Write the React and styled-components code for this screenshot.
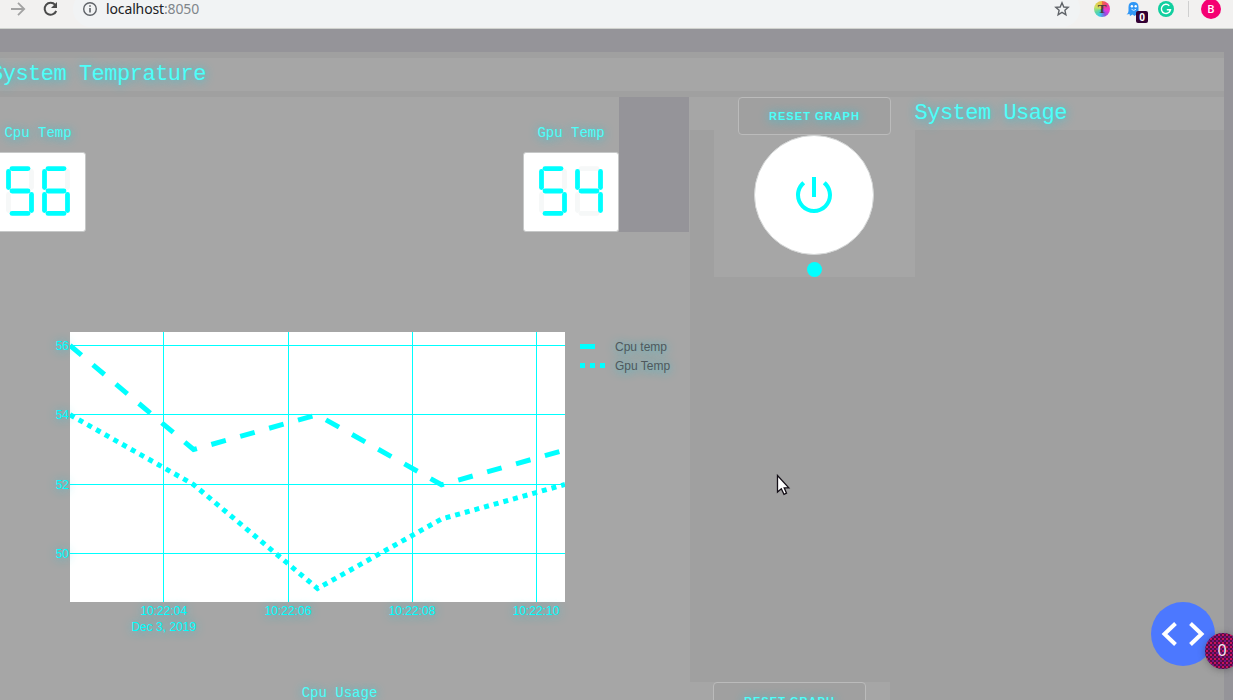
import React from "react";
import styled, { createGlobalStyle, css } from "styled-components";

const light = "#a6a6a6";
const mid = "#a0a0a0";
const dark = "#959499";
const cyan = "#00ffff";

const Global = createGlobalStyle`
  * { box-sizing: border-box; }
  html, body { margin: 0; height: 100%; overflow: hidden; background: ${dark}; }
`;

const glow = css`
  color: #4dfff9;
  text-shadow: 0 1px 10px rgba(30, 205, 225, 0.95);
`;

const Window = styled.div`
  position: relative;
  width: 1233px;
  height: 700px;
  overflow: hidden;
  background: ${dark};
`;

/* ---------- browser bar ---------- */
const Toolbar = styled.header`
  display: flex;
  align-items: center;
  height: 29px;
  padding: 0 12px 10px 10px;
  background: #f2f1f0;
  border-bottom: 1px solid #cfd2ce;
`;
const NavIcons = styled.div`
  display: flex;
  gap: 17px;
  width: 63px;
  flex: none;
`;
const Omnibox = styled.div`
  display: flex;
  align-items: center;
  flex: none;
  width: 1007px;
  height: 36px;
  margin: -9px 0;
  padding: 0 10px 0 9px;
  border-radius: 18px;
  background: #f1f3f4;
`;
const Url = styled.span`
  flex: 1;
  margin-left: 8px;
  font: 14px/18px "Noto Sans", "Open Sans", sans-serif;
  letter-spacing: -0.13px;
  color: #202124;
  span { color: #80868b; }
`;
const Extensions = styled.div`
  display: flex;
  align-items: center;
  flex: none;
  margin-left: 14px;
  gap: 14px;
`;
const Rainbow = styled.span`
  display: grid;
  place-items: center;
  width: 16px;
  height: 16px;
  border-radius: 50%;
  background: conic-gradient(#f07040, #f04080 12%, #e838d8 30%, #9050e0 42%, #38c8e8 55%, #60d8a0 68%, #d0e060 80%, #f0b840);
  font: bold 13px/16px "Liberation Serif", serif;
  color: #4a403c;
`;
const Ghost = styled.span`
  position: relative;
  width: 20px;
  height: 18px;
  svg { display: block; margin-left: 2px; }
`;
const GhostCount = styled.b`
  position: absolute;
  left: 12px;
  top: 11px;
  width: 12px;
  height: 12px;
  border-radius: 2px;
  background: #330033;
  color: #fff;
  font: bold 10px/12px "Open Sans", sans-serif;
  text-align: center;
`;
const Divider = styled.i`
  width: 1px;
  height: 16px;
  background: #cfcfcf;
`;
const Avatar = styled.span`
  display: grid;
  place-items: center;
  width: 20px;
  height: 20px;
  margin-left: -2px;
  border-radius: 50%;
  background: #f50072;
  color: #fff;
  font: 600 11px/20px "Open Sans", sans-serif;
`;

/* ---------- dashboard ---------- */
const Page = styled.main`
  width: 1224px;
  margin-top: 23px;
  background: ${mid};
`;
const Banner = styled.div`
  padding: 6px 0;
  height: 45px;
`;
const BannerInner = styled.div`
  height: 33px;
  background: ${light};
`;
const Heading = styled.h5`
  margin: 0;
  margin-left: ${(p) => p.$shift || 0}px;
  padding-top: 2px;
  font: 400 22px/30px "Liberation Mono", monospace;
  letter-spacing: -0.5px;
  white-space: pre;
  ${glow}
`;
const Columns = styled.div`
  display: flex;
  height: 603px;
`;
const Left = styled.section`
  width: 690px;
  flex: none;
  background: ${light};
`;
const Readouts = styled.div`
  display: flex;
  justify-content: space-between;
  width: 629px;
  margin-left: -10px;
`;
const ReadoutRow = styled.div`
  display: flex;
  height: 135px;
`;
const Filler = styled.div`
  width: 70px;
  background: ${dark};
`;
const Readout = styled.div`
  width: 96px;
  padding-top: 28px;
`;
const Label = styled.h6`
  margin: 0;
  font: 400 14px/17px "Liberation Mono", monospace;
  text-align: center;
  white-space: nowrap;
  ${glow}
`;
const Display = styled.div`
  display: flex;
  gap: 8px;
  width: 96px;
  height: 80px;
  margin-top: 10px;
  padding: 13px 15px;
  background: #fff;
  border: 1px solid #c6c8c8;
  border-radius: 3px;
`;
const ChartArea = styled.svg`
  display: block;
  width: 690px;
  height: 351px;
  margin-top: 100px;
  font: 12px "Liberation Sans", Arial, sans-serif;
  text { text-shadow: 0 1px 10px rgba(30, 205, 225, 0.85); }
`;
const UsageLabel = styled(Label)`
  padding: 2px 11px 0 0;
`;
const Right = styled.section`
  display: flex;
  flex-direction: column;
  justify-content: space-between;
  flex: 1;
`;
const UsageHeader = styled.div`
  display: flex;
  align-items: flex-start;
  height: 33px;
  padding-left: 24px;
  background: ${light};
`;
const Controls = styled.div`
  display: flex;
  flex-direction: column;
  align-items: center;
  width: 201px;
  height: 180px;
  background: ${light};
`;
const ResetButton = styled.button`
  width: 153px;
  height: 38px;
  flex: none;
  padding: 1px 0 0;
  border: 1px solid #bbb;
  border-radius: 4px;
  background: ${mid};
  font: bold 11px/35px "Liberation Sans", Arial, sans-serif;
  letter-spacing: 1.05px;
  ${glow}
`;
const PowerButton = styled.div`
  display: grid;
  place-items: center;
  width: 120px;
  height: 120px;
  flex: none;
  margin-right: 1px;
  border: 1px solid #d4d6d6;
  border-radius: 50%;
  background: #fff;
`;
const Led = styled.i`
  width: 15px;
  height: 15px;
  margin-top: 7px;
  border-radius: 50%;
  background: ${cyan};
`;
const FooterControls = styled.div`
  width: 200px;
  height: 18px;
  padding-left: 23px;
  overflow: hidden;
  background: ${light};
`;

/* ---------- overlays ---------- */
const DebugMenu = styled.div`
  position: absolute;
  left: 1151px;
  top: 602px;
  width: 64px;
  height: 64px;
  border-radius: 50%;
  background: #4c78ff;
`;
const DebugCount = styled.div`
  position: absolute;
  left: 54px;
  top: 31px;
  width: 36px;
  height: 36px;
  padding-right: 2px;
  border-radius: 50%;
  background:
    radial-gradient(circle, #f01468 0.6px, transparent 1px) 0 0 / 4px 4px,
    radial-gradient(circle, #7a1480 0.8px, transparent 1.1px) 2px 2px / 4px 4px,
    #560d42;
  box-shadow: 0 1px 7px rgba(60, 60, 60, 0.45);
  color: #f4e8f2;
  font: 16px/35px "Noto Sans", sans-serif;
  text-align: center;
`;
const Cursor = styled.svg`
  position: absolute;
  left: 776px;
  top: 474px;
`;

const SEGMENTS = {
  a: [6, 2.6, 22, 2.6],
  b: [25.5, 5.5, 25.5, 21.5],
  c: [25.5, 28.5, 25.5, 44.5],
  d: [6, 47.4, 22, 47.4],
  e: [2.5, 28.5, 2.5, 44.5],
  f: [2.5, 5.5, 2.5, 21.5],
  g: [6, 25, 22, 25],
};
const LIT = { 4: "bcfg", 5: "acdfg", 6: "acdefg" };

function Digit({ value }) {
  const keys = Object.keys(SEGMENTS).sort((p, q) => LIT[value].includes(p) - LIT[value].includes(q));
  return (
    <svg width="28" height="50" viewBox="0 0 28 50" strokeWidth="4.8" strokeLinecap="round">
      {keys.map((k) => {
        const [x1, y1, x2, y2] = SEGMENTS[k];
        return <line key={k} x1={x1} y1={y1} x2={x2} y2={y2} stroke={LIT[value].includes(k) ? cyan : "#f6f8f8"} />;
      })}
    </svg>
  );
}

function Temp({ label, value }) {
  return (
    <Readout>
      <Label>{label}</Label>
      <Display>{[...value].map((d, i) => <Digit key={i} value={d} />)}</Display>
    </Readout>
  );
}

const xTicks = [[163.5, "10:22:04"], [288.5, "10:22:06"], [412.5, "10:22:08"], [536.5, "10:22:10"]];
const yTicks = [[13.5, "56"], [82.5, "54"], [152.5, "52"], [221.5, "50"]];

function Chart() {
  return (
    <ChartArea viewBox="0 0 690 351">
      <defs><clipPath id="plot"><rect x="70" width="495" height="270" /></clipPath></defs>
      <rect x="70" width="495" height="270" fill="#fff" />
      <g stroke={cyan}>
        {xTicks.map(([x]) => <line key={x} x1={x} x2={x} y1="0" y2="270" />)}
        {yTicks.map(([y]) => <line key={y} x1="70" x2="565" y1={y} y2={y} />)}
      </g>
      <g fill="none" stroke={cyan} strokeWidth="5" clipPath="url(#plot)">
        <path strokeDasharray="15 15" d="M70 13.5L193.5 117.5L317 82.8L441.5 152.8L565 118" />
        <path strokeDasharray="5 5" d="M70 82.8L193.5 152.5L317.5 256.5L441.5 187L565 152.5" />
      </g>
      <g fill="none" stroke={cyan} strokeWidth="5">
        <path strokeDasharray="15 15" d="M580 14.5H610" />
        <path strokeDasharray="5 5" d="M580 33.5H610" />
      </g>
      <g fill={cyan}>
        {yTicks.map(([y, t]) => <text key={t} x="69" y={y + 4.3} textAnchor="end">{t}</text>)}
        {xTicks.map(([x, t], i) => <text key={t} x={i ? x - 0.5 : x + 0.3} y="283" textAnchor="middle">{t}</text>)}
        <text x="163.8" y="299" textAnchor="middle">Dec 3, 2019</text>
      </g>
      <g fill="#4f585c">
        <text x="615" y="19">Cpu temp</text>
        <text x="615" y="38">Gpu Temp</text>
      </g>
    </ChartArea>
  );
}

export default function App() {
  return (
    <Window>
      <Global />
      <Toolbar>
        <NavIcons>
          <svg width="16" height="16" viewBox="0 0 16 16" fill="none" stroke="#a3a3a3" strokeWidth="1.8">
            <path d="M1 8H14M8 1.8L14.2 8L8 14.2" />
          </svg>
          <svg width="16" height="16" viewBox="0 0 16 16" fill="none" stroke="#4a4a4a" strokeWidth="2">
            <path d="M12.2 3.8A6 6 0 1 0 13.2 10" />
            <path d="M14 1V7H8Z" fill="#4a4a4a" stroke="none" />
          </svg>
        </NavIcons>
        <Omnibox>
          <svg width="16" height="16" viewBox="0 0 16 16" fill="none" stroke="#5f6368">
            <circle cx="8" cy="8" r="6.3" strokeWidth="1.4" />
            <path d="M8 7V11.5M8 4.2V5.8" strokeWidth="1.6" />
          </svg>
          <Url>localhost<span>:8050</span></Url>
          <svg width="16" height="16" viewBox="0 0 16 16" fill="none" stroke="#5f6368" strokeWidth="1.4">
            <path d="M8 1.8L9.8 6L14.2 6.4L10.9 9.3L11.9 13.8L8 11.4L4.1 13.8L5.1 9.3L1.8 6.4L6.2 6Z" />
          </svg>
        </Omnibox>
        <Extensions>
          <Rainbow>T</Rainbow>
          <Ghost>
            <svg width="15" height="18" viewBox="0 0 14 18">
              <path fill="#3097f5" d="M2 7Q2 2 7 2T12 7V13L14 15L10 14.5L8 16L6 14.5L3.5 16L3 14L0 14.5Q2 13 2 11Z" />
              <circle cx="5.4" cy="6.3" r="1.2" fill="#fff" />
              <circle cx="9.2" cy="6.3" r="1.2" fill="#fff" />
              <path d="M5 9.3Q7.2 11.5 9.5 9.3" fill="none" stroke="#d8ecff" />
            </svg>
            <GhostCount>0</GhostCount>
          </Ghost>
          <svg width="16" height="16" viewBox="0 0 16 16">
            <circle cx="8" cy="8" r="8" fill="#11cf9f" />
            <path d="M11.3 4.7A4.6 4.6 0 1 0 12.5 8.8H8.8M12.4 8.6L10.9 11.8" fill="none" stroke="#fff" strokeWidth="1.4" />
          </svg>
          <Divider />
          <Avatar>B</Avatar>
        </Extensions>
      </Toolbar>

      <Page>
        <Banner>
          <BannerInner><Heading $shift={-10}>System Temprature</Heading></BannerInner>
        </Banner>
        <Columns>
          <Left>
            <ReadoutRow>
              <Readouts>
                <Temp label="Cpu Temp" value="56" />
                <Temp label="Gpu Temp" value="54" />
              </Readouts>
              <Filler />
            </ReadoutRow>
            <Chart />
            <UsageLabel>Cpu Usage</UsageLabel>
          </Left>
          <Right>
            <UsageHeader>
              <Controls>
                <ResetButton>RESET GRAPH</ResetButton>
                <PowerButton>
                  <svg width="48" height="48" viewBox="0 0 24 24" fill={cyan}>
                    <path d="M13 3h-2v10h2V3zm4.83 2.17l-1.42 1.42C17.99 7.86 19 9.81 19 12c0 3.87-3.13 7-7 7s-7-3.13-7-7c0-2.19 1.01-4.14 2.58-5.42L6.17 5.17C4.23 6.82 3 9.26 3 12c0 4.97 4.03 9 9 9s9-4.03 9-9c0-2.74-1.23-5.18-3.17-6.83z" />
                  </svg>
                </PowerButton>
                <Led />
              </Controls>
              <Heading $shift={-0.5}>System Usage</Heading>
            </UsageHeader>
            <FooterControls><ResetButton>RESET GRAPH</ResetButton></FooterControls>
          </Right>
        </Columns>
      </Page>

      <DebugMenu>
        <svg width="64" height="64" viewBox="0 0 64 64" fill="none" stroke="#fff" strokeWidth="4">
          <path d="M24.5 21.5L13.5 32L24.5 42.5M39.5 21.5L50.5 32L39.5 42.5" />
        </svg>
        <DebugCount>0</DebugCount>
      </DebugMenu>
      <Cursor width="16" height="24" viewBox="0 0 16 24">
        <path d="M1.5 1.5V18L5.3 14.8L8 20.3L10.5 19.2L8.2 13.8H12.8Z" fill="#fff" stroke="#151018" strokeWidth="1.3" />
      </Cursor>
    </Window>
  );
}
